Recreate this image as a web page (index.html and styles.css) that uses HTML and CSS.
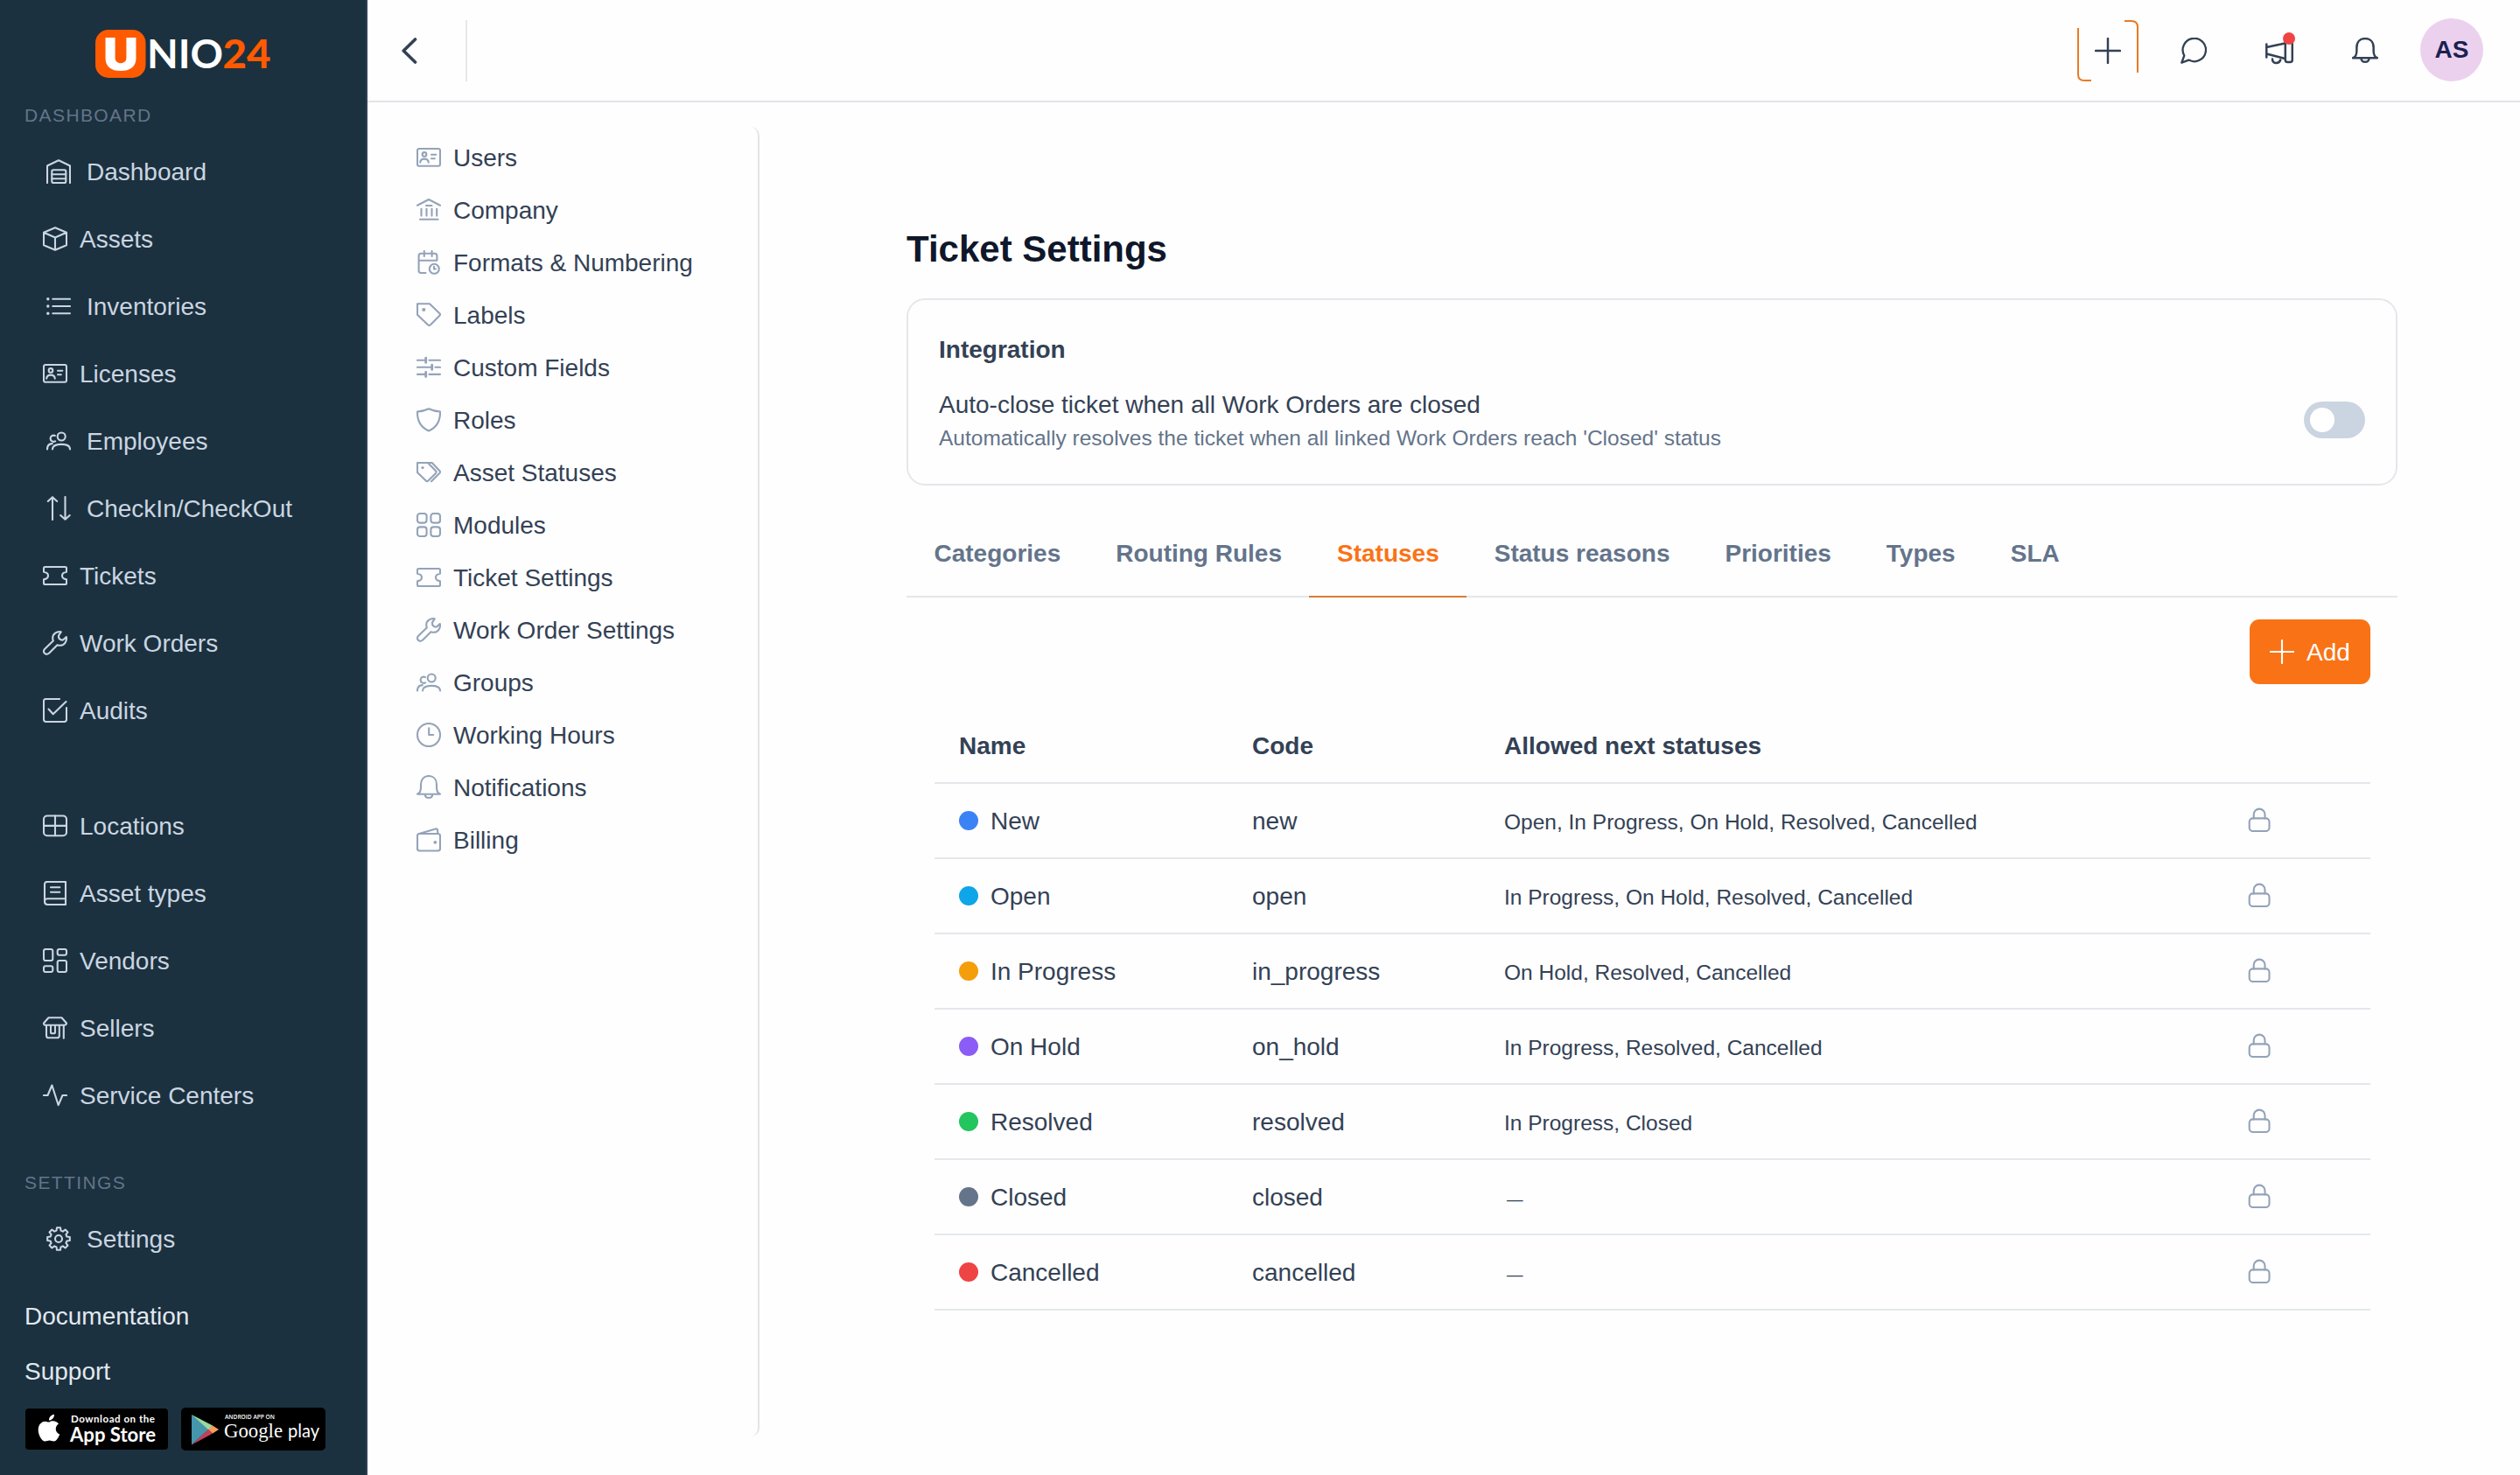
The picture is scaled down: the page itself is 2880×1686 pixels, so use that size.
FILE: index.html
```html
<!DOCTYPE html>
<html lang="en">
<head>
  <meta charset="UTF-8">
  <meta name="viewport" content="width=device-width, initial-scale=1.0">
  <title>UNIO24 - Ticket Settings</title>
  <link rel="stylesheet" href="styles.css">
</head>
<body>
  <!-- Icon set -->
  <svg class="icon-defs" aria-hidden="true">
    <symbol id="i-warehouse" viewBox="0 0 28 28"><path d="M1 27V7.5L14 1.2l13 6.3V27"/><rect x="6.3" y="12.2" width="16" height="14.8" rx="1.5"/><path d="M6.3 17.2h16M6.3 22.2h16"/></symbol>
    <symbol id="i-box" viewBox="0 0 28 28"><path d="M14 1.2l13 5.6v14.4l-13 5.6-13-5.6V6.8zM1 6.8l13 5.7 13-5.7M14 12.5v14"/></symbol>
    <symbol id="i-list" viewBox="0 0 28 28"><path d="M7.3 5.8H27M7.3 14H27M7.3 22.2H27"/><g class="dot"><circle cx="1.8" cy="5.8" r="1.7"/><circle cx="1.8" cy="14" r="1.7"/><circle cx="1.8" cy="22.2" r="1.7"/></g></symbol>
    <symbol id="i-id-card" viewBox="0 0 28 28"><rect x="1" y="4" width="26" height="19.8" rx="2"/><circle cx="9" cy="10.4" r="2.3"/><path d="M4.2 19.6c.3-2.700 1.800-4 4.800-4s4.500 1.300 4.800 4M17 10.700h5.300M17 15.300h3.800"/></symbol>
    <symbol id="i-users" viewBox="0 0 28 28"><circle cx="17.200" cy="9" r="4.500"/><path d="M7 23.500c0-4 3.500-5.600 10.200-5.600s9.800 1.900 9.800 5.600M1 23.500c0-4.300 1.800-6.200 5.700-6.400M9.800 8a3.600 3.600 0 1 0 .3 6.300"/></symbol>
    <symbol id="i-arrows" viewBox="0 0 28 28"><path d="M7 27V1.200M1.800 6L7 1.200 12.200 6M21.500 1v25.800M16.200 22l5.300 4.800 5.200-4.800"/></symbol>
    <symbol id="i-ticket" viewBox="0 0 28 28"><path d="M2.500 4h23Q27 4 27 5.500v4.200c-3 .4-5 2-5 4.300s2 3.900 5 4.300v4.200q0 1.500-1.500 1.500h-23Q1 24 1 22.500v-4.200c3-.4 5-2 5-4.300s-2-3.900-5-4.300V5.500Q1 4 2.500 4z"/></symbol>
    <symbol id="i-wrench" viewBox="0 0 28 28"><path d="M20.800 1.300c-4.800-1-9.600 2.100-9.600 7 0 1.200.2 2.200.6 3.200L2.200 20.700c-1.600 1.600-1.600 3.700-.2 5.100s3.600 1.400 5.200-.2l9.300-9.400c1 .4 2 .6 3.100.6 4.900 0 8.200-4.700 7.200-9.700l-3.800 3.400c-3 .6-5.400-1.700-5-4.900z"/></symbol>
    <symbol id="i-check-square" viewBox="0 0 28 28"><path d="M19 1H3.500Q1 1 1 3.500v21Q1 27 3.500 27h21q2.500 0 2.500-2.500V11M6.500 12.500l5.200 5.800L26.500 4"/></symbol>
    <symbol id="i-table" viewBox="0 0 28 28"><rect x="1" y="2.500" width="26" height="22.800" rx="4"/><path d="M14 2.500v22.800M1 13.900h26"/></symbol>
    <symbol id="i-book" viewBox="0 0 28 28"><path d="M26 1H5Q2 1 2 4v19.500Q2 27 5.500 27H26zM26 20.300H5.500Q2 20.300 2 23.500M9 7.300h10.300M9 12.700h10.300"/></symbol>
    <symbol id="i-objects" viewBox="0 0 28 28"><rect x="1" y="1" width="10.300" height="13" rx="2"/><rect x="16.700" y="1" width="10.300" height="6.800" rx="2"/><rect x="1" y="20.200" width="10.300" height="6.800" rx="2"/><rect x="16.700" y="14" width="10.300" height="13" rx="2"/></symbol>
    <symbol id="i-shop" viewBox="0 0 28 28"><path d="M6.500 2.300h15L27 8.500q0 2.200-2.200 2.200H3.200Q1 10.700 1 8.500zM4 10.700v12q0 2.600 2.600 2.600h9.600q2.600 0 2.600-2.600v-12M9 10.700v8q0 1.500 1.500 1.500h2q1.500 0 1.500-1.500v-8M23.800 10.700v15"/></symbol>
    <symbol id="i-activity" viewBox="0 0 28 28"><path d="M1 14h4.500l4.900-11.500 7.300 22.700L22.500 14H27"/></symbol>
    <symbol id="i-cog" viewBox="0 0 28 28"><path d="M12 1.200h4l.5 3.400 2.350 1 2.750-2.100 2.900 2.900-2.100 2.750 1 2.350 3.400.5v4l-3.400.5-1 2.350 2.100 2.750-2.900 2.900-2.750-2.100-2.350 1-.5 3.400h-4l-.5-3.400-2.350-1-2.750 2.100-2.900-2.900 2.100-2.750-1-2.350-3.400-.5v-4l3.400-.5 1-2.350-2.100-2.750 2.900-2.900 2.750 2.100 2.350-1z"/><circle cx="14" cy="14" r="4"/></symbol>
    <symbol id="i-bank" viewBox="0 0 28 28"><path d="M1 8.700L14 2l13 6.700M11 9h6.500M5.500 12.800v7.800M11.500 12.800v7.800M17.500 12.800v7.800M23.200 12.800v7.800M4 24.700h20.500"/></symbol>
    <symbol id="i-calendar" viewBox="0 0 28 28"><path d="M10.500 26H5.200q-2.600 0-2.600-2.600V6.400q0-2.600 2.600-2.600h15.600q2.600 0 2.600 2.600v5.400H2.600M8.800 1v6M17.600 1v6"/><circle cx="20.300" cy="21.300" r="5.500"/><path d="M20 18.800v2.700h2"/></symbol>
    <symbol id="i-tag" viewBox="0 0 28 28"><path d="M1 1.200h14l11.400 11q1.300 1.300 0 2.600L16 25.300q-1.500 1.400-3 0L1 13.700z"/><circle class="dot" cx="8.300" cy="8" r="2.100"/></symbol>
    <symbol id="i-sliders" viewBox="0 0 28 28"><path d="M1 5.800h9.700M14.500 5.800H27M1 13.800h16.500M21.500 13.800H27M1 21.900h9.700M14.500 21.900H27"/><path class="thick" d="M10.700 3.200v5.200M17.700 11.200v5.200M10.700 19.300v5.200"/></symbol>
    <symbol id="i-shield" viewBox="0 0 28 28"><path d="M14 1.200q6 2.800 13 3.300C27.300 15 23 22.500 14 26.500 5 22.500.7 15 1 4.500q7-.5 13-3.300z"/></symbol>
    <symbol id="i-tags" viewBox="0 0 28 28"><path d="M1 3h12l9 9.300q1.200 1.300 0 2.600l-8.600 8.600q-1.300 1.300-2.600 0L1 14zM14 3h3.800l8.700 9.200q1 1.200 0 2.500L17 24.200"/><circle class="dot" cx="7" cy="8.600" r="1.600"/></symbol>
    <symbol id="i-grid" viewBox="0 0 28 28"><rect x="1" y="1" width="10.600" height="10.600" rx="3"/><rect x="16.400" y="1" width="10.600" height="10.600" rx="3"/><rect x="1" y="16.400" width="10.600" height="10.600" rx="3"/><rect x="16.400" y="16.400" width="10.600" height="10.600" rx="3"/></symbol>
    <symbol id="i-clock" viewBox="0 0 28 28"><circle cx="14" cy="14" r="13"/><path d="M14.200 6.300V14h5"/></symbol>
    <symbol id="i-bell" viewBox="0 0 28 28"><path d="M1 21.700q4-1.500 4-7.700v-3.500C5 4.800 8.500 1 14 1s9 3.800 9 9.500V14q0 6.200 4 7.700zM9.800 22.500c.6 4.600 7.800 4.600 8.400 0"/></symbol>
    <symbol id="i-wallet" viewBox="0 0 28 28"><rect x="1" y="7" width="26" height="19.500" rx="2.500"/><path d="M3 7l18.800-5.600q1.800-.4 2.200 1.200l.3 4.400"/><circle class="dot" cx="21.300" cy="16.800" r="1.900"/></symbol>
    <symbol id="i-lock" viewBox="0 0 28 28"><rect x="2.700" y="12.400" width="22.800" height="14.600" rx="4"/><path d="M7.700 12.400V8a6.400 6.400 0 0 1 12.800 0v4.400"/></symbol>
    <symbol id="i-plus" viewBox="0 0 28 28"><path d="M14 1v26M1 14h26"/></symbol>
    <symbol id="i-comment" viewBox="0 0 30 30"><path d="M1.300 28.700l3-8.200A13.200 13.200 0 1 1 9.500 25.600z"/></symbol>
    <symbol id="i-megaphone" viewBox="0 0 32 32"><path d="M1.300 8.500v15M1.300 12L22.500 7.500M1.300 19.500L22.500 25M8 25.500c0 5.500 7.500 6 9.200 1"/><rect x="22.800" y="3" width="8" height="26" rx="2.500"/></symbol>
  </svg>

  <div class="app">
    <aside class="sidebar">
      <div class="logo">
        <svg width="212" height="80" viewBox="0 -12 212 80">
          <rect width="57.500" height="55" rx="15" fill="#ff5a00"/>
          <text class="logo-u" x="9" y="46" textLength="40" lengthAdjust="spacingAndGlyphs">U</text>
          <text class="logo-name" x="59" y="44" textLength="87" lengthAdjust="spacingAndGlyphs">NIO</text>
          <text class="logo-num" x="145.500" y="44" textLength="55" lengthAdjust="spacingAndGlyphs">24</text>
        </svg>
      </div>

      <div class="nav-label">DASHBOARD</div>
      <nav class="nav">
        <a class="nav-item wide"><svg class="icon"><use href="#i-warehouse"/></svg>Dashboard</a>
        <a class="nav-item"><svg class="icon"><use href="#i-box"/></svg>Assets</a>
        <a class="nav-item wide"><svg class="icon"><use href="#i-list"/></svg>Inventories</a>
        <a class="nav-item"><svg class="icon"><use href="#i-id-card"/></svg>Licenses</a>
        <a class="nav-item wide"><svg class="icon"><use href="#i-users"/></svg>Employees</a>
        <a class="nav-item wide"><svg class="icon"><use href="#i-arrows"/></svg>CheckIn/CheckOut</a>
        <a class="nav-item"><svg class="icon"><use href="#i-ticket"/></svg>Tickets</a>
        <a class="nav-item"><svg class="icon"><use href="#i-wrench"/></svg>Work Orders</a>
        <a class="nav-item"><svg class="icon"><use href="#i-check-square"/></svg>Audits</a>
      </nav>
      <nav class="nav nav-catalog">
        <a class="nav-item"><svg class="icon"><use href="#i-table"/></svg>Locations</a>
        <a class="nav-item"><svg class="icon"><use href="#i-book"/></svg>Asset types</a>
        <a class="nav-item"><svg class="icon"><use href="#i-objects"/></svg>Vendors</a>
        <a class="nav-item"><svg class="icon"><use href="#i-shop"/></svg>Sellers</a>
        <a class="nav-item"><svg class="icon"><use href="#i-activity"/></svg>Service Centers</a>
      </nav>
      <div class="nav-label nav-label-settings">SETTINGS</div>
      <nav class="nav">
        <a class="nav-item wide"><svg class="icon"><use href="#i-cog"/></svg>Settings</a>
      </nav>

      <div class="sidebar-footer">
        <a>Documentation</a>
        <a>Support</a>
        <div class="stores">
          <svg width="163" height="47" viewBox="0 0 163 47">
            <rect width="163" height="47" rx="4" fill="#000"/>
            <path fill="#fff" d="M27.500 15.500c2-1.600 7.500-2 10.500 2-4.500 3-4.500 9.500 1.200 12-1.700 4.500-4.200 8-6.700 8-2 0-3-1-5-1s-3 1-5 1C18.500 37.500 14.700 30 14.700 24.500c0-6.500 4.300-9.800 7.800-9.800 2 0 3.500 1.100 5 .8zM27 13.500c-.2-3.500 2.500-6.300 6-6.800.3 3.500-2.700 6.800-6 6.800z"/>
            <text class="store-small" x="52" y="15.500" textLength="96" lengthAdjust="spacing">Download on the</text>
            <text class="store-name" x="51" y="37.500" textLength="98" lengthAdjust="spacingAndGlyphs">App Store</text>
          </svg>
          <svg width="165" height="49" viewBox="0 0 165 49">
            <rect width="165" height="49" rx="5" fill="#000"/>
            <path fill="#4596ac" d="M12 8v34.500l20-18z"/>
            <path fill="#9bd7a0" d="M12 8l24 12.500-4.500 5z"/>
            <path fill="#c2405c" d="M12 42.500l24-13-4.500-5z"/>
            <path fill="#f79e5c" d="M36 20.500l7 4.500-7 4.500-5-5z"/>
            <text class="play-small" x="50" y="13" textLength="57" lengthAdjust="spacingAndGlyphs">ANDROID APP ON</text>
            <text class="play-google" x="49" y="33.500" textLength="67" lengthAdjust="spacingAndGlyphs">Google</text>
            <text class="play-name" x="122" y="33.500" textLength="36" lengthAdjust="spacingAndGlyphs">play</text>
          </svg>
        </div>
      </div>
    </aside>

    <div class="main">
      <header class="topbar">
        <svg class="back" width="18" height="32" viewBox="0 0 18 32"><path d="M15.500 3L2.200 16l13.300 13"/></svg>
        <div class="topbar-divider"></div>
        <div class="topbar-actions">
          <div class="quick-add">
            <svg class="quick-add-frame" width="70" height="70" viewBox="0 0 70 70"><path d="M1 9v53q0 7 7 7h8M54 1h8q7 0 7 7v52"/></svg>
            <svg class="icon icon-lg"><use href="#i-plus"/></svg>
          </div>
          <div class="icon-btn"><svg class="icon icon-lg"><use href="#i-comment"/></svg></div>
          <div class="icon-btn"><svg class="icon icon-xl"><use href="#i-megaphone"/></svg><span class="badge"></span></div>
          <div class="icon-btn"><svg class="icon icon-lg"><use href="#i-bell"/></svg></div>
          <div class="avatar">AS</div>
        </div>
      </header>

      <div class="content">
        <nav class="submenu">
          <a class="submenu-item"><svg class="icon"><use href="#i-id-card"/></svg>Users</a>
          <a class="submenu-item"><svg class="icon"><use href="#i-bank"/></svg>Company</a>
          <a class="submenu-item"><svg class="icon"><use href="#i-calendar"/></svg>Formats &amp; Numbering</a>
          <a class="submenu-item"><svg class="icon"><use href="#i-tag"/></svg>Labels</a>
          <a class="submenu-item"><svg class="icon"><use href="#i-sliders"/></svg>Custom Fields</a>
          <a class="submenu-item"><svg class="icon"><use href="#i-shield"/></svg>Roles</a>
          <a class="submenu-item"><svg class="icon"><use href="#i-tags"/></svg>Asset Statuses</a>
          <a class="submenu-item"><svg class="icon"><use href="#i-grid"/></svg>Modules</a>
          <a class="submenu-item"><svg class="icon"><use href="#i-ticket"/></svg>Ticket Settings</a>
          <a class="submenu-item"><svg class="icon"><use href="#i-wrench"/></svg>Work Order Settings</a>
          <a class="submenu-item"><svg class="icon"><use href="#i-users"/></svg>Groups</a>
          <a class="submenu-item"><svg class="icon"><use href="#i-clock"/></svg>Working Hours</a>
          <a class="submenu-item"><svg class="icon"><use href="#i-bell"/></svg>Notifications</a>
          <a class="submenu-item"><svg class="icon"><use href="#i-wallet"/></svg>Billing</a>
        </nav>

        <main class="page">
          <h1>Ticket Settings</h1>

          <section class="card">
            <h2>Integration</h2>
            <div class="setting">
              <div>
                <div>Auto-close ticket when all Work Orders are closed</div>
                <div class="hint">Automatically resolves the ticket when all linked Work Orders reach 'Closed' status</div>
              </div>
              <div class="switch"><span class="switch-knob"></span></div>
            </div>
          </section>

          <div class="tabs">
            <a class="tab">Categories</a>
            <a class="tab">Routing Rules</a>
            <a class="tab active">Statuses</a>
            <a class="tab">Status reasons</a>
            <a class="tab">Priorities</a>
            <a class="tab">Types</a>
            <a class="tab">SLA</a>
          </div>

          <section class="tab-panel">
            <div class="toolbar">
              <button class="add-btn"><svg class="icon"><use href="#i-plus"/></svg>Add</button>
            </div>
            <table class="statuses">
              <thead>
                <tr><th class="col-name">Name</th><th class="col-code">Code</th><th>Allowed next statuses</th><th class="col-lock"></th></tr>
              </thead>
              <tbody>
                <tr><td><div class="status"><span class="status-dot new"></span>New</div></td><td>new</td><td><span class="next">Open, In Progress, On Hold, Resolved, Cancelled</span></td><td><svg class="icon lock"><use href="#i-lock"/></svg></td></tr>
                <tr><td><div class="status"><span class="status-dot open"></span>Open</div></td><td>open</td><td><span class="next">In Progress, On Hold, Resolved, Cancelled</span></td><td><svg class="icon lock"><use href="#i-lock"/></svg></td></tr>
                <tr><td><div class="status"><span class="status-dot in-progress"></span>In Progress</div></td><td>in_progress</td><td><span class="next">On Hold, Resolved, Cancelled</span></td><td><svg class="icon lock"><use href="#i-lock"/></svg></td></tr>
                <tr><td><div class="status"><span class="status-dot on-hold"></span>On Hold</div></td><td>on_hold</td><td><span class="next">In Progress, Resolved, Cancelled</span></td><td><svg class="icon lock"><use href="#i-lock"/></svg></td></tr>
                <tr><td><div class="status"><span class="status-dot resolved"></span>Resolved</div></td><td>resolved</td><td><span class="next">In Progress, Closed</span></td><td><svg class="icon lock"><use href="#i-lock"/></svg></td></tr>
                <tr><td><div class="status"><span class="status-dot closed"></span>Closed</div></td><td>closed</td><td><span class="next dash">—</span></td><td><svg class="icon lock"><use href="#i-lock"/></svg></td></tr>
                <tr><td><div class="status"><span class="status-dot cancelled"></span>Cancelled</div></td><td>cancelled</td><td><span class="next dash">—</span></td><td><svg class="icon lock"><use href="#i-lock"/></svg></td></tr>
              </tbody>
            </table>
          </section>
        </main>
      </div>
    </div>
  </div>
</body>
</html>
```
FILE: styles.css
```css
html {
  font-size: 28px;
}
* {
  box-sizing: border-box;
}
body {
  margin: 0;
  font-family: "Liberation Sans", Arial, Helvetica, sans-serif;
  font-size: 1rem;
  line-height: 1.5;
  color: #334155;
  background: #fefefe;
}
.icon-defs {
  display: none;
}
.icon {
  width: 28px;
  height: 28px;
  flex: none;
  overflow: visible;
  fill: none;
  stroke: currentColor;
  stroke-width: 2.1;
  stroke-linecap: round;
  stroke-linejoin: round;
}
.icon-lg {
  width: 30px;
  height: 30px;
  stroke-width: 2.3;
}
.icon-xl {
  width: 32px;
  height: 32px;
  stroke-width: 2.5;
}
.dot {
  fill: currentColor;
  stroke: none;
}
.thick {
  stroke-width: 2.8;
}
.app {
  display: flex;
  height: 1686px;
}

/* Sidebar */
.sidebar {
  width: 420px;
  flex: none;
  background: #1b313f;
  border-right: 2px solid #334155;
  color: #cbd5e1;
}
.logo {
  height: 118px;
  padding: 22px 0 0 109px;
}
.logo svg {
  display: block;
}
.logo-u {
  font: 900 51px Inter, sans-serif;
  fill: #fff;
}
.logo-name,
.logo-num {
  font: 700 46px Lato, sans-serif;
  fill: #fff;
}
.logo-num {
  font-weight: 900;
  fill: #ff5a00;
}
.nav-label {
  height: 40px;
  padding-left: 28px;
  font-size: 21px;
  line-height: 28px;
  letter-spacing: 1.4px;
  color: #64748b;
}
.nav-label-settings {
  margin-top: 47px;
}
.nav-catalog {
  margin-top: 55px;
}
.nav-item {
  display: flex;
  align-items: center;
  gap: 14px;
  height: 77px;
  padding-left: 49px;
}
.nav-item.wide {
  gap: 18px;
  padding-left: 53px;
}
.nav-item .icon {
  margin-bottom: 1px;
}
.sidebar-footer {
  display: flex;
  flex-direction: column;
  gap: 21px;
  padding: 29px 0 0 28px;
  color: #e2e8f0;
}
.stores {
  display: flex;
  align-items: center;
  gap: 15px;
  margin-top: -1px;
  padding-left: 1px;
}
.store-small {
  font: 700 11.5px Lato, sans-serif;
  fill: #fff;
}
.store-name {
  font: 700 22px Lato, sans-serif;
  fill: #fff;
}
.play-small {
  font: 600 6.8px "Open Sans", sans-serif;
  fill: #fff;
}
.play-google {
  font: 23px "Liberation Serif", serif;
  fill: #fff;
}
.play-name {
  font: 400 22px Lato, sans-serif;
  fill: #fff;
}

/* Top bar */
.main {
  flex: 1;
  display: flex;
  flex-direction: column;
}
.topbar {
  height: 117px;
  flex: none;
  display: flex;
  align-items: center;
  padding: 0 42px 0 39px;
  border-bottom: 2px solid #e2e4e8;
}
.back {
  fill: none;
  stroke: #334155;
  stroke-width: 3.6;
  stroke-linecap: round;
  stroke-linejoin: round;
}
.topbar-divider {
  width: 2px;
  height: 70px;
  margin-left: 55px;
  background: #e5e7ea;
}
.topbar-actions {
  display: flex;
  align-items: center;
  gap: 28px;
  margin-left: auto;
}
.quick-add,
.icon-btn {
  position: relative;
  width: 70px;
  height: 70px;
  display: flex;
  align-items: center;
  justify-content: center;
}
.quick-add-frame {
  position: absolute;
  top: 0;
  left: 0;
  fill: none;
  stroke: #e87b26;
  stroke-width: 2;
}
.badge {
  position: absolute;
  top: 14px;
  left: 39px;
  width: 14px;
  height: 14px;
  border-radius: 50%;
  background: #ef4444;
}
.avatar {
  width: 72px;
  height: 72px;
  display: flex;
  align-items: center;
  justify-content: center;
  margin-bottom: 1px;
  border-radius: 50%;
  background: #ecd1ee;
  color: #1a2150;
  font-weight: bold;
}

/* Settings menu */
.content {
  flex: 1;
  display: flex;
}
.submenu {
  width: 420px;
  height: 1497px;
  flex: none;
  margin: 28px 0 0 28px;
  padding: 6px 0 0 28px;
  border-right: 2px solid #e2e4e8;
  border-radius: 10px;
}
.submenu-item {
  display: flex;
  align-items: center;
  gap: 14px;
  height: 60px;
}
.submenu-item .icon {
  margin-bottom: 2px;
  color: #94a3b8;
}

/* Page */
.page {
  width: 1704px;
  margin: 140px 0 0 168px;
}
h1 {
  margin: 0 0 28px;
  font-size: 42px;
  line-height: 56px;
  color: #0f172a;
}
.card {
  padding: 36px 35px 35px;
  border: 2px solid #e4e7eb;
  border-radius: 21px;
}
.card h2 {
  margin: 0 0 21px;
  font-size: 28px;
}
.setting {
  display: flex;
  align-items: center;
  justify-content: space-between;
}
.hint {
  margin-top: -1px;
  font-size: 24.5px;
  line-height: 35px;
  color: #64748b;
}
.switch {
  width: 70px;
  height: 42px;
  padding: 7px;
  border-radius: 21px;
  background: #cbd5e1;
}
.switch-knob {
  display: block;
  width: 28px;
  height: 28px;
  border-radius: 50%;
  background: #fff;
}
.tabs {
  display: flex;
  margin-top: 28px;
  box-shadow: inset 0 -2px #e4e7eb;
}
.tab {
  padding: 29px 31.5px 27px;
  border-bottom: 2px solid transparent;
  font-weight: bold;
  color: #64748b;
}
.tab.active {
  color: #f97316;
  border-color: #d67d38;
}
.tab-panel {
  padding: 25px 31px 0 32px;
}
.toolbar {
  display: flex;
  justify-content: flex-end;
  margin-bottom: 28px;
}
.add-btn {
  width: 138px;
  height: 74px;
  display: flex;
  align-items: center;
  gap: 14px;
  padding: 2px 23px 0;
  border: none;
  border-radius: 11px;
  background: #f97316;
  color: #fff;
  font: inherit;
}
.add-btn .icon {
  margin-bottom: 2px;
}

/* Statuses table */
.statuses {
  width: 100%;
  table-layout: fixed;
  border-collapse: separate;
  border-spacing: 0;
}
.statuses th,
.statuses td {
  height: 86px;
  padding: 2px 28px 0;
  border-bottom: 2px solid #e4e7eb;
  text-align: left;
}
.col-name {
  width: 335px;
}
.col-code {
  width: 288px;
}
.col-lock {
  width: 169px;
}
.status {
  display: flex;
  align-items: center;
  gap: 13.600px;
}
.status-dot {
  width: 22.4px;
  height: 22.4px;
  margin-bottom: 2px;
  border-radius: 50%;
}
.next {
  font-size: 24.5px;
}
.next.dash {
  padding-left: 3px;
  font-size: 18.5px;
  vertical-align: 1px;
}
.lock {
  display: block;
  margin-bottom: 4px;
  color: #94a3b8;
}
.new { background: #3b82f6; }
.open { background: #0ea5e9; }
.in-progress { background: #f59e0b; }
.on-hold { background: #8b5cf6; }
.resolved { background: #22c55e; }
.closed { background: #64748b; }
.cancelled { background: #ef4444; }
```
